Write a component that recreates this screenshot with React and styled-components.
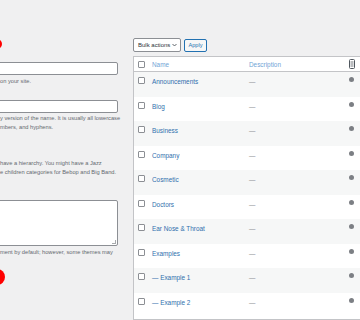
import React from "react";
import styled, { createGlobalStyle } from "styled-components";

const Global = createGlobalStyle`
  html, body { margin: 0; padding: 0; background: #f0f0f1; }
  body { font-family: "Liberation Sans", Arial, sans-serif; }
`;

const Page = styled.div`
  display: flex;
  gap: 15px;
  width: 360px;
  height: 320px;
  overflow: hidden;
  background: #f0f0f1;
`;

const FormCol = styled.div`
  position: relative;
  flex: 0 0 118px;
  min-width: 0;
  width: 118px;
  display: flex;
  flex-direction: column;
  padding-top: 62px;
`;

const Marker = styled.span`
  position: absolute;
  left: ${(p) => p.$left}px;
  top: ${(p) => p.$top}px;
  width: ${(p) => p.$size}px;
  height: ${(p) => p.$size}px;
  border-radius: 50%;
  background: #ff0000;
`;

const Field = styled.div`
  margin-left: -4px;
  width: 122px;
  height: ${(p) => p.$h}px;
  margin-top: ${(p) => p.$mt || 0}px;
  box-sizing: border-box;
  background: #fff;
  border: 1px solid #8c8f94;
  border-radius: 2px;
  position: relative;
`;

const Grip = styled.span`
  position: absolute;
  right: 1px;
  bottom: 1px;
  width: 3px;
  height: 3px;
  border-right: 1px solid #a7aaad;
  border-bottom: 1px solid #a7aaad;
`;

const Help = styled.p`
  margin: ${(p) => p.$mt || 0}px 0 0;
  font-size: 5.7px;
  line-height: 9px;
  color: #646970;
  white-space: nowrap;
`;

const ListCol = styled.div`
  flex: 0 0 232px;
  display: flex;
  flex-direction: column;
  padding-top: 38px;
`;

const Toolbar = styled.div`
  display: flex;
  align-items: center;
  gap: 3px;
  height: 14px;
`;

const Select = styled.div`
  box-sizing: border-box;
  width: 48px;
  height: 14px;
  display: flex;
  align-items: center;
  justify-content: space-between;
  padding: 0 3px 0 4px;
  background: #fff;
  border: 1px solid #8c8f94;
  border-radius: 2px;
  font-size: 6px;
  color: #2c3338;
`;

const ApplyBtn = styled.div`
  box-sizing: border-box;
  width: 23px;
  height: 13px;
  display: flex;
  align-items: center;
  justify-content: center;
  background: #f6f7f7;
  border: 1px solid #2271b1;
  border-radius: 2px;
  font-size: 5.6px;
  color: #2271b1;
`;

const Table = styled.div`
  margin-top: 4px;
  background: #fff;
  border: 1px solid #c3c4c7;
  border-right: none;
  display: flex;
  flex-direction: column;
  flex: 1;
`;

const Row = styled.div`
  display: grid;
  grid-template-columns: 18px 97px 96px 1fr;
  box-sizing: border-box;
  height: ${(p) => (p.$head ? "15px" : "24.5px")};
  align-items: ${(p) => (p.$head ? "center" : "start")};
  padding-top: ${(p) => (p.$head ? 0 : 5)}px;
  background: ${(p) => (p.$striped ? "#f6f7f7" : "#fff")};
  border-bottom: ${(p) => (p.$head ? "1px solid #c3c4c7" : "none")};
  font-size: 6.4px;
  line-height: 7px;
`;

const CheckCell = styled.div`
  display: flex;
  padding-left: 4px;
`;

const Check = styled.span`
  display: block;
  width: 7px;
  height: 7px;
  box-sizing: border-box;
  border: 1px solid #8c8f94;
  border-radius: 1px;
  background: #fff;
`;

const NameLink = styled.span`
  color: ${(p) => (p.$head ? "#72a4d6" : "#2f6fad")};
  white-space: nowrap;
  padding-top: ${(p) => (p.$head ? 0 : 1)}px;
`;

const Desc = styled.span`
  color: ${(p) => (p.$head ? "#72a4d6" : "#8c8f94")};
  white-space: nowrap;
  padding-top: ${(p) => (p.$head ? 0 : 1)}px;
`;

const CountCell = styled.div`
  display: flex;
  padding-left: 4px;
`;

const Dot = styled.span`
  display: block;
  width: 5px;
  height: 5px;
  border-radius: 50%;
  background: #7c7f84;
`;

const rows = [
  "Announcements",
  "Blog",
  "Business",
  "Company",
  "Cosmetic",
  "Doctors",
  "Ear Nose & Throat",
  "Examples",
  "— Example 1",
  "— Example 2",
];

function CommentIcon() {
  return (
    <svg width="6" height="10" viewBox="0 0 6 10">
      <rect x="0.5" y="0.5" width="5" height="9" rx="1" fill="#fff" stroke="#50575e" />
      <line x1="1.5" y1="3" x2="4.5" y2="3" stroke="#50575e" strokeWidth="0.8" />
      <line x1="1.5" y1="5" x2="4.5" y2="5" stroke="#50575e" strokeWidth="0.8" />
      <line x1="1.5" y1="7" x2="4.5" y2="7" stroke="#50575e" strokeWidth="0.8" />
    </svg>
  );
}

export default function App() {
  return (
    <>
      <Global />
      <Page>
        <FormCol>
          <Marker $left={-8} $top={39} $size={10} />
          <Field $h={13} />
          <Help $mt={2}>on your site.</Help>
          <Field $h={13} $mt={14} />
          <Help $mt={1}>y version of the name. It is usually all lowercase</Help>
          <Help>mbers, and hyphens.</Help>
          <Help $mt={27}>have a hierarchy. You might have a Jazz</Help>
          <Help>e children categories for Bebop and Big Band.</Help>
          <Field $h={46} $mt={23}>
            <Grip />
          </Field>
          <Help $mt={2}>ment by default; however, some themes may</Help>
          <Marker $left={-11} $top={269} $size={16} />
        </FormCol>
        <ListCol>
          <Toolbar>
            <Select>
              <span>Bulk actions</span>
              <svg width="5" height="4" viewBox="0 0 5 4">
                <path d="M0.5 1 L2.5 3 L4.5 1" fill="none" stroke="#50575e" strokeWidth="0.9" />
              </svg>
            </Select>
            <ApplyBtn>Apply</ApplyBtn>
          </Toolbar>
          <Table>
            <Row $head>
              <CheckCell>
                <Check />
              </CheckCell>
              <NameLink $head>Name</NameLink>
              <Desc $head>Description</Desc>
              <CountCell>
                <CommentIcon />
              </CountCell>
            </Row>
            {rows.map((name, i) => (
              <Row key={name} $striped={i % 2 === 0}>
                <CheckCell>
                  <Check />
                </CheckCell>
                <NameLink>{name}</NameLink>
                <Desc>—</Desc>
                <CountCell>
                  <Dot />
                </CountCell>
              </Row>
            ))}
          </Table>
        </ListCol>
      </Page>
    </>
  );
}
